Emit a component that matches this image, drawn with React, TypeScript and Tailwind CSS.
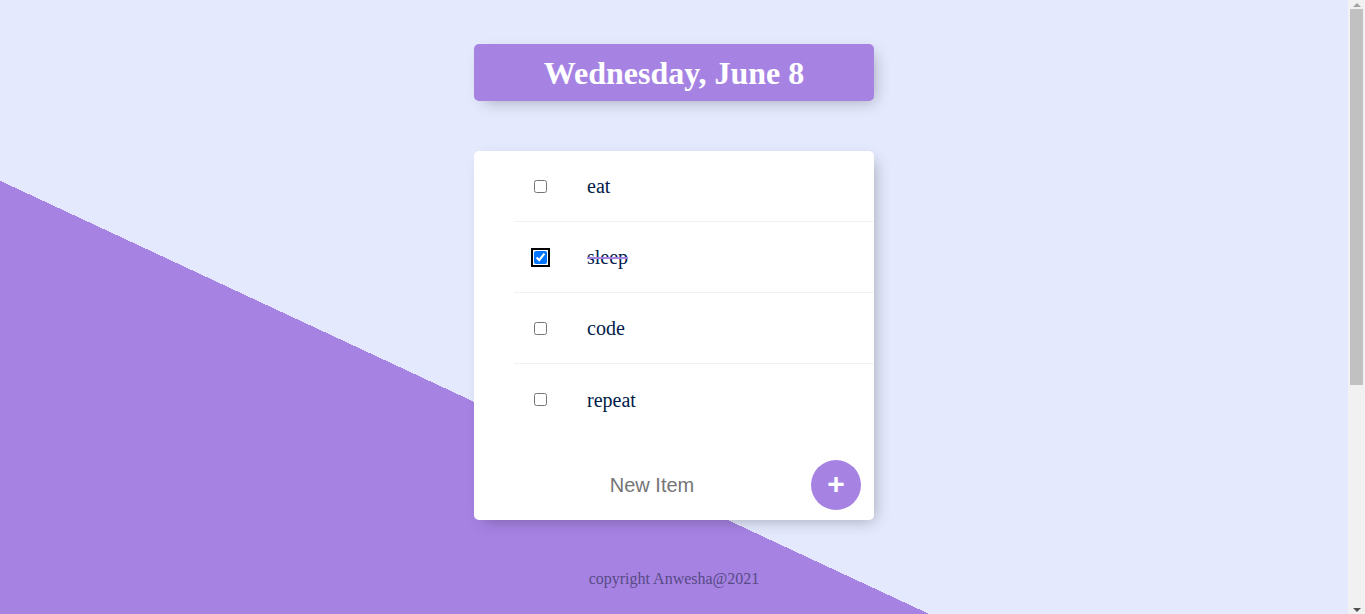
import React from "react";

const items = [
  { text: "eat", checked: false },
  { text: "sleep", checked: true },
  { text: "code", checked: false },
  { text: "repeat", checked: false },
];

export default function App() {
  return (
    <div className="w-full h-[614px] overflow-hidden flex">
      <div
        className="w-[1348px] h-[614px] shrink-0 bg-[linear-gradient(205deg,#E4E9FD_50%,#A683E3_50%)] bg-[length:1348px_990px] bg-top bg-no-repeat flex flex-col items-center"
        style={{ fontFamily: '"Liberation Serif", "Times New Roman", serif' }}
      >
        <div className="mt-[44px] w-[400px] h-[57px] rounded-[5px] bg-[#A683E3] shadow-[5px_5px_15px_-5px_rgba(0,0,0,0.3)] flex items-center justify-center">
          <h1 className="text-white font-bold text-[32px] leading-none">Wednesday, June 8</h1>
        </div>

        <div className="mt-[50px] w-[400px] bg-white rounded-[5px] shadow-[5px_5px_15px_-5px_rgba(0,0,0,0.3)]">
          {items.map((it, i) => (
            <div
              key={it.text}
              className={
                "ml-[40px] h-[71px] flex items-center " +
                (i < items.length - 1 ? "border-b border-[#F1F1F1]" : "")
              }
            >
              <input
                type="checkbox"
                defaultChecked={it.checked}
                className={
                  "m-[20px] w-[13px] h-[13px] " +
                  (it.checked ? "outline-2 outline-black outline-offset-1 rounded-[2px]" : "")
                }
              />
              <p
                className={
                  "ml-[20px] text-[20px] text-[#00204A] " +
                  (it.checked ? "line-through decoration-[#A683E3] decoration-2" : "")
                }
              >
                {it.text}
              </p>
            </div>
          ))}
          <div className="pt-[15px] h-[85px] flex items-center">
            <input
              type="text"
              placeholder="New Item"
              className="ml-[40px] w-[276px] h-[40px] text-center text-[20px] outline-none placeholder:text-[#757575] bg-transparent"
              style={{ fontFamily: '"Liberation Sans", Arial, sans-serif' }}
            />
            <button
              className="ml-[21px] w-[50px] h-[50px] rounded-full bg-[#A683E3] text-white flex items-center justify-center text-[30px] leading-none font-bold"
              style={{ fontFamily: '"Liberation Sans", Arial, sans-serif' }}
            >
              <span className="-mt-[3px]">+</span>
            </button>
          </div>
        </div>

        <footer className="mt-[51px] text-[16px] text-[#584a85] leading-none">copyright Anwesha@2021</footer>
      </div>

      <div className="w-[17px] h-[614px] shrink-0 bg-[#F1F1F1] flex flex-col items-center">
        <div className="h-[9px] flex items-center justify-center">
          <div className="w-0 h-0 border-l-[4px] border-r-[4px] border-b-[4px] border-l-transparent border-r-transparent border-b-[#A3A3A3]" />
        </div>
        <div className="w-[13px] h-[376px] bg-[#C1C1C1]" />
        <div className="flex-1" />
        <div className="h-[9px] flex items-center justify-center">
          <div className="w-0 h-0 border-l-[4px] border-r-[4px] border-t-[4px] border-l-transparent border-r-transparent border-t-[#505050]" />
        </div>
      </div>
    </div>
  );
}
